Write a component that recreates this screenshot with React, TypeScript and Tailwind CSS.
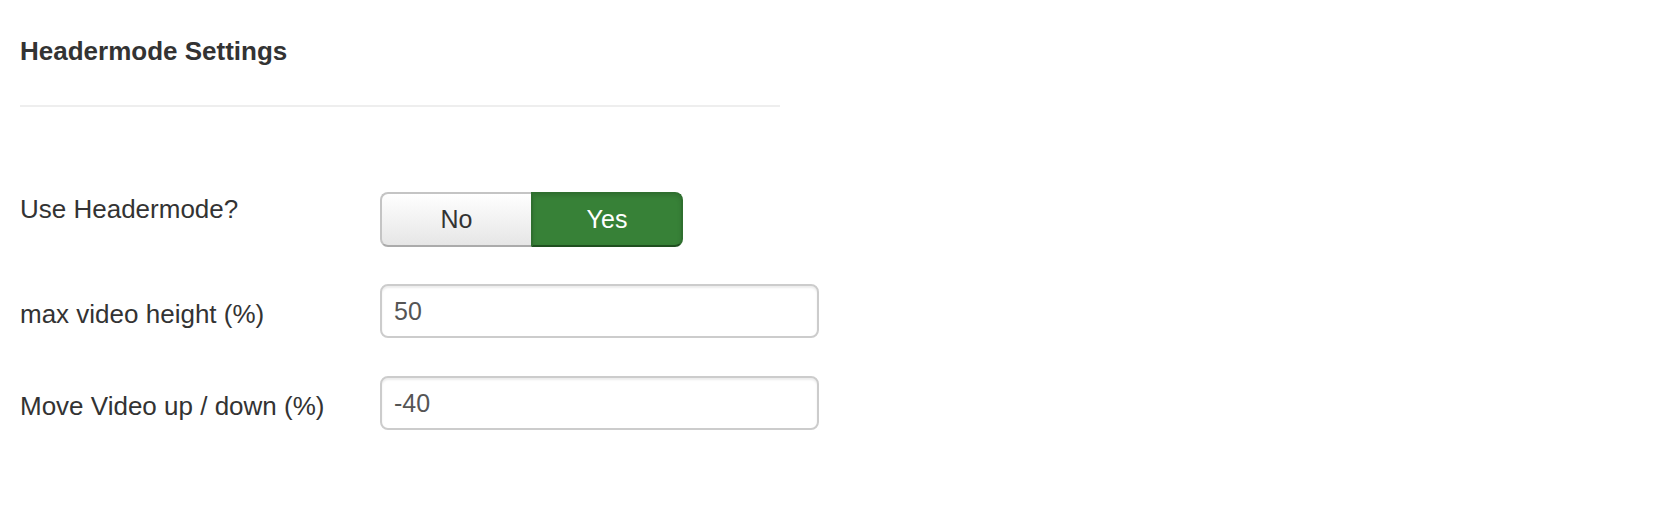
import React, { useState } from "react";

type FieldRowProps = {
  label: string;
  labelClass?: string;
  className?: string;
  children: React.ReactNode;
};

const FieldRow: React.FC<FieldRowProps> = ({ label, labelClass = "", className = "", children }) => (
  <div className={`flex items-start ${className}`}>
    <label className={`w-[360px] shrink-0 text-[26px] leading-[36px] text-[#333] ${labelClass}`}>
      {label}
    </label>
    <div>{children}</div>
  </div>
);

const YesNoToggle: React.FC<{ value: boolean; onChange: (v: boolean) => void }> = ({ value, onChange }) => {
  const base = "h-[55px] text-[25px] leading-none flex items-center justify-center border-2";
  return (
    <div className="flex">
      <button
        type="button"
        onClick={() => onChange(false)}
        className={`${base} w-[151px] rounded-l-[8px] border-r-0 ${
          value
            ? "bg-gradient-to-b from-white to-[#e6e6e6] border-[#c4c4c4] border-b-[#ababab] text-[#333]"
            : "bg-[#bd362f] border-[#942a25] text-white"
        }`}
      >
        No
      </button>
      <button
        type="button"
        onClick={() => onChange(true)}
        className={`${base} w-[152px] rounded-r-[8px] ${
          value
            ? "bg-[#378137] border-[#2f6f2f] border-b-[#1f4f1f] text-white shadow-[inset_0_2px_4px_rgba(0,0,0,0.12)]"
            : "bg-gradient-to-b from-white to-[#e6e6e6] border-[#c4c4c4] border-b-[#ababab] text-[#333]"
        }`}
      >
        Yes
      </button>
    </div>
  );
};

const TextInput: React.FC<{ value: string; onChange: (v: string) => void }> = ({ value, onChange }) => (
  <input
    type="text"
    value={value}
    onChange={(e) => onChange(e.target.value)}
    className="w-[439px] h-[54px] px-[12px] text-[25px] text-[#555] bg-white border-2 border-[#cccccc] rounded-[8px] shadow-[inset_0_2px_2px_rgba(0,0,0,0.075)] outline-none focus:border-[#51a7e8]"
  />
);

export default function App() {
  const [useHeader, setUseHeader] = useState(true);
  const [maxHeight, setMaxHeight] = useState("50");
  const [offset, setOffset] = useState("-40");

  return (
    <div className="w-full h-[532px] bg-white pl-5 font-['Liberation_Sans',Arial,sans-serif] text-[#333]">
      <h3 className="pt-[33px] text-[26px] leading-[36px] font-bold text-[#333]">Headermode Settings</h3>
      <div className="mt-[36px] w-[760px] h-[2px] bg-[#eeeeee]" />

      <FieldRow label="Use Headermode?" className="mt-[85px]" labelClass="-mt-px">
        <YesNoToggle value={useHeader} onChange={setUseHeader} />
      </FieldRow>

      <FieldRow label="max video height (%)" className="mt-[37px]" labelClass="pt-[12px]">
        <TextInput value={maxHeight} onChange={setMaxHeight} />
      </FieldRow>

      <FieldRow label="Move Video up / down (%)" className="mt-[38px]" labelClass="pt-[12px]">
        <TextInput value={offset} onChange={setOffset} />
      </FieldRow>
    </div>
  );
}
